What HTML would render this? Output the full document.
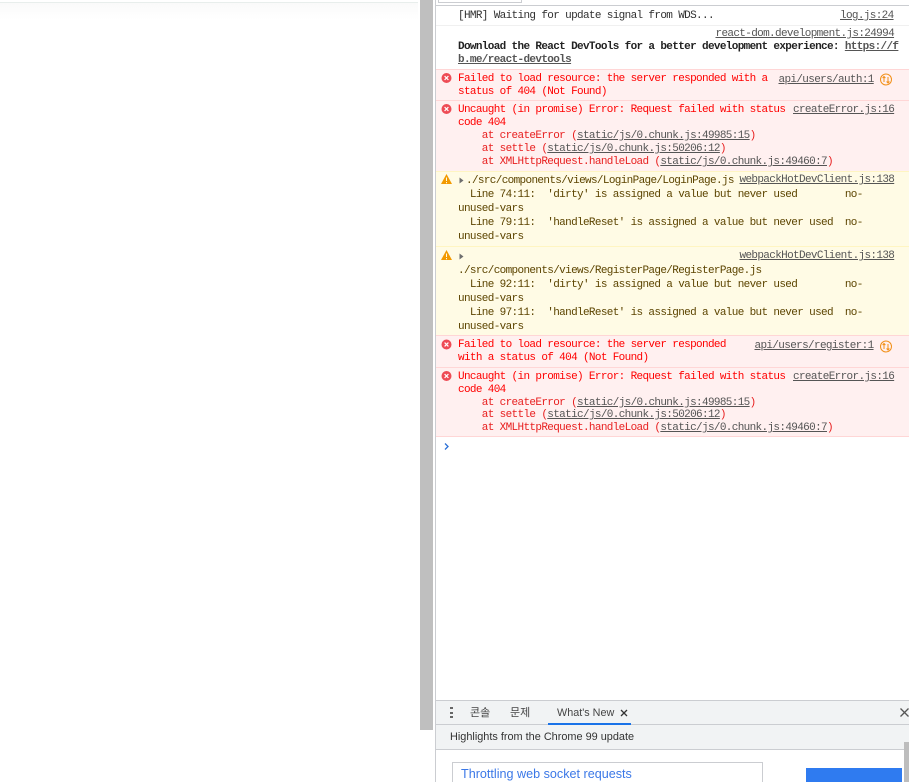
<!DOCTYPE html>
<html lang="ko"><head><meta charset="utf-8"><title>Console</title>
<style>
html,body{margin:0;padding:0;background:#fff}
#p{position:relative;width:909px;height:782px;overflow:hidden;background:#fff}
#p div,#p span,#p svg{position:absolute}
.t{font:11px/13px "Liberation Mono","DejaVu Sans Mono",monospace;letter-spacing:-.65px;white-space:pre;height:13px;margin-top:1px}
.e{color:#f00}.w{color:#5c4400}.k{color:#303030}
.l{color:#555;text-decoration:underline}
.i{color:#e82020}
.u{text-decoration:underline;color:#555}
.s{font-family:"Liberation Sans","Noto Sans CJK KR",sans-serif;white-space:pre;color:#444}
</style></head><body><div id="p">
<div style="left:0;top:2px;width:418px;height:1px;background:#e8eeec"></div>
<div style="left:0;top:3px;width:418px;height:17px;background:linear-gradient(#fafafa,#fff)"></div>
<div style="left:420px;top:0;width:13px;height:730px;background:#bfbfbf"></div>
<div style="left:435px;top:0;width:1px;height:782px;background:#cbcdd1"></div>
<div style="left:436px;top:5px;width:473px;height:1px;background:#cbcdd1"></div>
<div style="left:438px;top:0;width:82px;height:2px;border:1px solid #cbcdd1;border-top:0;background:#fff"></div>

<div style="left:436px;top:25px;width:473px;height:1px;background:#f0f0f0"></div>
<div style="left:436px;top:69px;width:473px;height:103px;background:#fff0f0"></div>
<div style="left:436px;top:172px;width:473px;height:163px;background:#fffbe5"></div>
<div style="left:436px;top:335px;width:473px;height:102px;background:#fff0f0"></div>
<div style="left:436px;top:69px;width:473px;height:1px;background:#ffd6d6"></div>
<div style="left:436px;top:100px;width:473px;height:1px;background:#ffd6d6"></div>
<div style="left:436px;top:171px;width:473px;height:1px;background:#fff5c2"></div>
<div style="left:436px;top:246px;width:473px;height:1px;background:#fff5c2"></div>
<div style="left:436px;top:335px;width:473px;height:1px;background:#ffd6d6"></div>
<div style="left:436px;top:367px;width:473px;height:1px;background:#ffd6d6"></div>
<div style="left:436px;top:436px;width:473px;height:1px;background:#ffd6d6"></div>

<div class="t k" style="left:458px;top:9px">[HMR] Waiting for update signal from WDS...</div>
<div class="t l" style="left:840px;top:9px">log.js:24</div>
<div class="t l" style="left:715.5px;top:27px">react-dom.development.js:24994</div>
<div class="t" style="left:458px;top:40px;color:#222;font-weight:bold">Download the React DevTools for a better development experience: <span class="u" style="position:static">https://f</span></div>
<div class="t u" style="left:458px;top:53px;font-weight:bold">b.me/react-devtools</div>

<div class="t e" style="left:458px;top:72px">Failed to load resource: the server responded with a</div>
<div class="t e" style="left:458px;top:85px">status of 404 (Not Found)</div>
<div class="t l" style="left:778.5px;top:73px">api/users/auth:1</div>

<div class="t e" style="left:458px;top:103px">Uncaught (in promise) Error: Request failed with status</div>
<div class="t l" style="left:793px;top:103px">createError.js:16</div>
<div class="t e" style="left:458px;top:116px">code 404</div>
<div class="t i" style="left:458px;top:129px">    at createError (<span class="u" style="position:static">static/js/0.chunk.js:49985:15</span>)</div>
<div class="t i" style="left:458px;top:142px">    at settle (<span class="u" style="position:static">static/js/0.chunk.js:50206:12</span>)</div>
<div class="t i" style="left:458px;top:155px">    at XMLHttpRequest.handleLoad (<span class="u" style="position:static">static/js/0.chunk.js:49460:7</span>)</div>

<div class="t w" style="left:466px;top:174px">./src/components/views/LoginPage/LoginPage.js</div>
<div class="t l" style="left:739.5px;top:173px">webpackHotDevClient.js:138</div>
<div class="t w" style="left:458px;top:188px">  Line 74:11:  'dirty' is assigned a value but never used        no-</div>
<div class="t w" style="left:458px;top:202px">unused-vars</div>
<div class="t w" style="left:458px;top:216px">  Line 79:11:  'handleReset' is assigned a value but never used  no-</div>
<div class="t w" style="left:458px;top:230px">unused-vars</div>

<div class="t l" style="left:739.5px;top:249px">webpackHotDevClient.js:138</div>
<div class="t w" style="left:458px;top:264px">./src/components/views/RegisterPage/RegisterPage.js</div>
<div class="t w" style="left:458px;top:278px">  Line 92:11:  'dirty' is assigned a value but never used        no-</div>
<div class="t w" style="left:458px;top:292px">unused-vars</div>
<div class="t w" style="left:458px;top:306px">  Line 97:11:  'handleReset' is assigned a value but never used  no-</div>
<div class="t w" style="left:458px;top:320px">unused-vars</div>

<div class="t e" style="left:458px;top:338px">Failed to load resource: the server responded</div>
<div class="t e" style="left:458px;top:351px">with a status of 404 (Not Found)</div>
<div class="t l" style="left:754.5px;top:339px">api/users/register:1</div>

<div class="t e" style="left:458px;top:370px">Uncaught (in promise) Error: Request failed with status</div>
<div class="t l" style="left:793px;top:370px">createError.js:16</div>
<div class="t e" style="left:458px;top:383px">code 404</div>
<div class="t i" style="left:458px;top:396px">    at createError (<span class="u" style="position:static">static/js/0.chunk.js:49985:15</span>)</div>
<div class="t i" style="left:458px;top:408px">    at settle (<span class="u" style="position:static">static/js/0.chunk.js:50206:12</span>)</div>
<div class="t i" style="left:458px;top:421px">    at XMLHttpRequest.handleLoad (<span class="u" style="position:static">static/js/0.chunk.js:49460:7</span>)</div>

<svg style="left:0;top:0" width="909" height="782" viewBox="0 0 909 782">
<circle cx="446.5" cy="78" r="5" fill="#ee4b55"/><path d="M444.6 76.1l3.8 3.8M448.4 76.1l-3.8 3.8" stroke="#fff" stroke-width="1.2"/>
<circle cx="446.5" cy="109" r="5" fill="#ee4b55"/><path d="M444.6 107.1l3.8 3.8M448.4 107.1l-3.8 3.8" stroke="#fff" stroke-width="1.2"/>
<circle cx="446.5" cy="344.500" r="5" fill="#ee4b55"/><path d="M444.6 342.6l3.8 3.8M448.4 342.6l-3.8 3.8" stroke="#fff" stroke-width="1.2"/>
<circle cx="446.5" cy="376" r="5" fill="#ee4b55"/><path d="M444.6 374.1l3.8 3.8M448.4 374.1l-3.8 3.8" stroke="#fff" stroke-width="1.2"/>
<path d="M446.5 174l5.5 10h-11z" fill="#f29900"/><path d="M446.5 177.5v3.500M446.5 182v1.200" stroke="#fffbe5" stroke-width="1"/>
<path d="M446.5 250l5.5 10h-11z" fill="#f29900"/><path d="M446.5 253.5v3.500M446.5 258v1.200" stroke="#fffbe5" stroke-width="1"/>
<path d="M459.5 177.5l4 3-4 3z" fill="#6e6e6e"/>
<path d="M459.5 253.5l4 3-4 3z" fill="#6e6e6e"/>
<g fill="none" stroke="#f29018" stroke-width="1">
<circle cx="886" cy="79.5" r="5.5"/><path d="M884 76.5v5.5M882.6 78l1.4-1.5 1.4 1.5M888 77v6M886.6 81.5l1.4 1.5 1.4-1.5"/>
<circle cx="886" cy="346.500" r="5.5"/><path d="M884 343.5v5.5M882.6 345l1.4-1.5 1.4 1.5M888 344v6M886.6 348.5l1.4 1.5 1.4-1.5"/>
</g>
<path d="M445 443.5l3 3-3 3" fill="none" stroke="#2a6fd6" stroke-width="1.3"/>
</svg>

<div style="left:436px;top:700px;width:473px;height:1px;background:#cbcdd1"></div>
<div style="left:436px;top:701px;width:473px;height:48px;background:#f1f3f4"></div>
<div style="left:436px;top:724px;width:473px;height:1px;background:#cbcdd1"></div>
<div style="left:436px;top:749px;width:473px;height:1px;background:#cbcdd1"></div>
<div style="left:450px;top:707px;width:3px;height:2px;background:#666"></div>
<div style="left:450px;top:712px;width:3px;height:2px;background:#666"></div>
<div style="left:450px;top:716px;width:3px;height:2px;background:#666"></div>
<div class="s" style="left:470px;top:705px;font-size:11px;line-height:16px">콘솔</div>
<div class="s" style="left:510px;top:705px;font-size:11px;line-height:16px">문제</div>
<div class="s" style="left:557px;top:705px;font-size:10.8px;line-height:16px">What's New</div>
<svg style="left:620px;top:709px" width="8" height="8" viewBox="0 0 8 8"><path d="M1 1l6 6M7 1l-6 6" stroke="#333" stroke-width="1.3"/></svg>
<div style="left:548px;top:723px;width:83px;height:2px;background:#1a73e8"></div>
<svg style="left:900px;top:708px" width="9" height="10" viewBox="0 0 9 10"><path d="M0.5 0.5l8 8M8.500 0.5l-8 8" stroke="#555" stroke-width="1.3"/></svg>
<div class="s" style="left:450px;top:729px;font-size:10.9px;line-height:16px;color:#333">Highlights from the Chrome 99 update</div>
<div style="left:452px;top:762px;width:309px;height:30px;border:1px solid #cbcdd1;background:#fff"></div>
<div class="s" style="left:461px;top:766px;font-size:12.6px;line-height:16px;color:#3b78e7">Throttling web socket requests</div>
<div style="left:806px;top:768px;width:96px;height:14px;background:#2f7bf0"></div>
<div style="left:904px;top:742px;width:5px;height:40px;background:#bdbdbd"></div>
</div></body></html>
